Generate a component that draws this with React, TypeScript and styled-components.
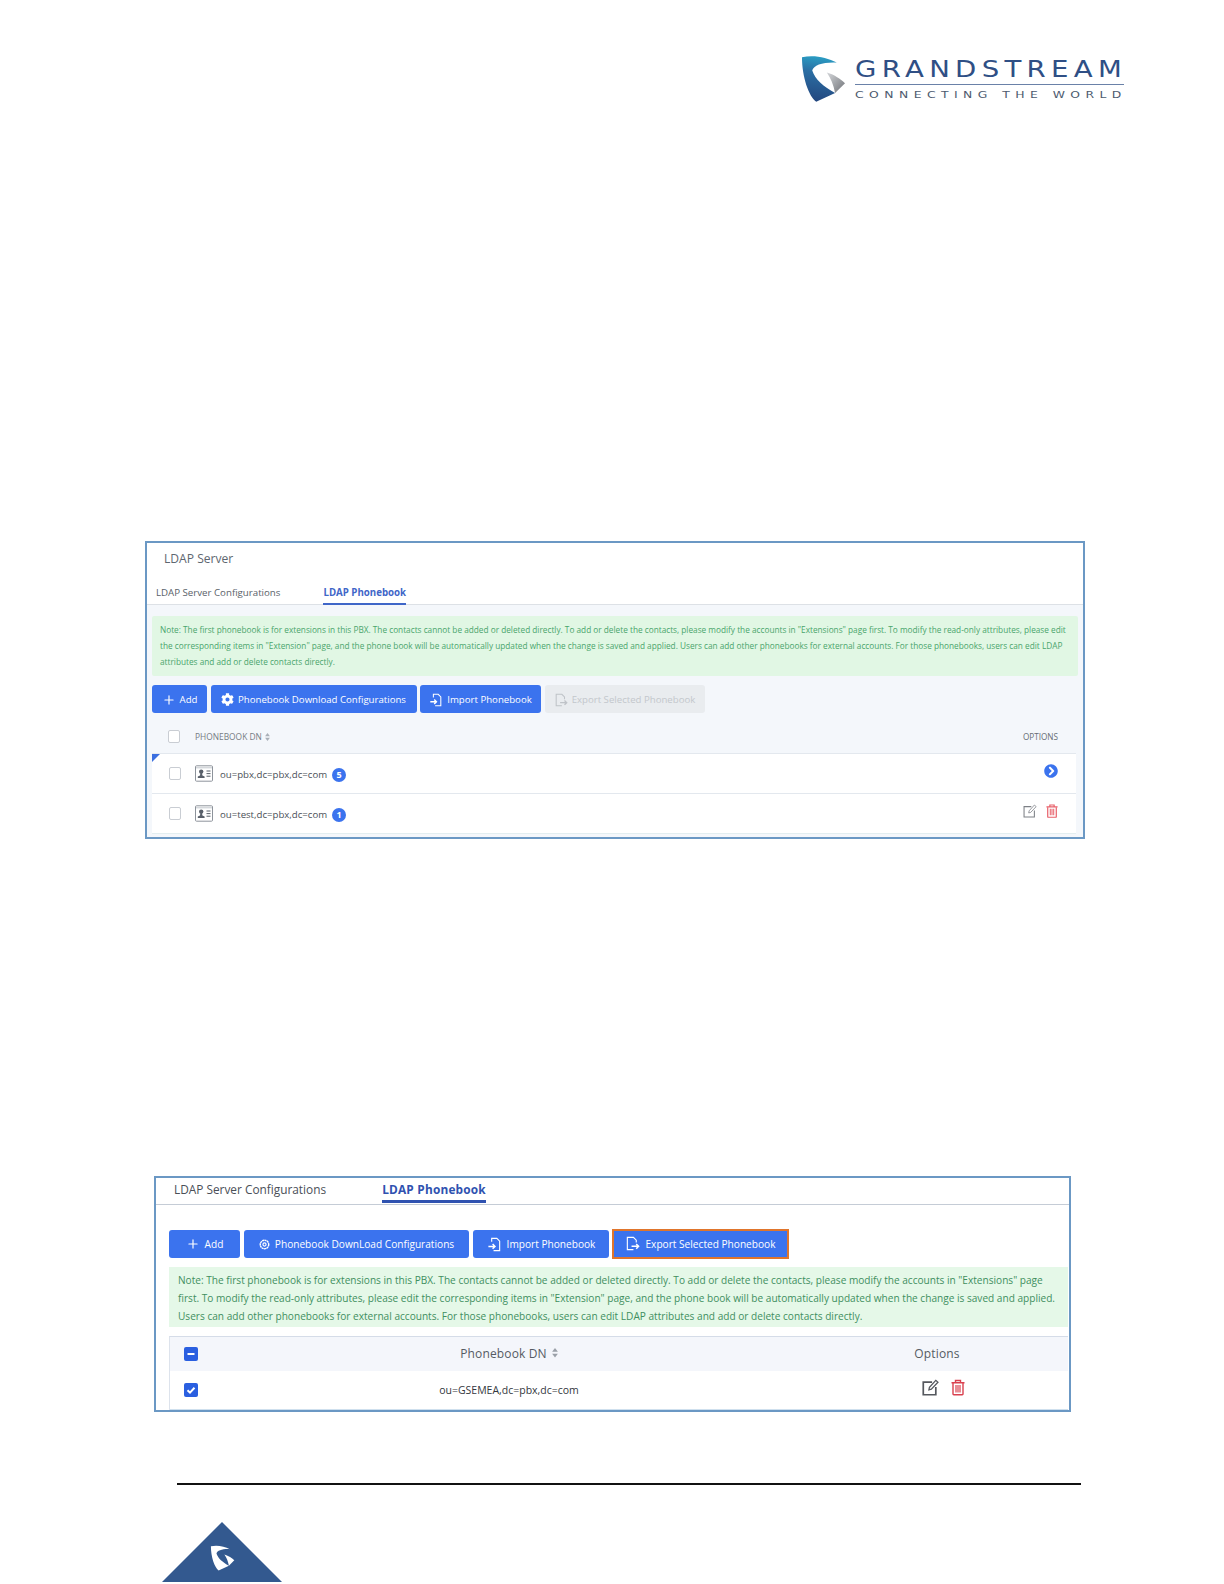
import React from "react";
import styled, { createGlobalStyle } from "styled-components";
import { FaCog, FaChevronCircleRight } from "react-icons/fa";
import { Plus } from "lucide-react";

const BLUE = "#3b73ee";
const FONT = `"Open Sans", "Noto Sans", sans-serif`;

const noteA = [
  'Note: The first phonebook is for extensions in this PBX. The contacts cannot be added or deleted directly. To add or delete the contacts, please modify the accounts in "Extensions" page first. To modify the read-only attributes, please edit',
  'the corresponding items in "Extension" page, and the phone book will be automatically updated when the change is saved and applied. Users can add other phonebooks for external accounts. For those phonebooks, users can edit LDAP',
  "attributes and add or delete contacts directly.",
];
const noteB = [
  'Note: The first phonebook is for extensions in this PBX. The contacts cannot be added or deleted directly. To add or delete the contacts, please modify the accounts in "Extensions" page',
  'first. To modify the read-only attributes, please edit the corresponding items in "Extension" page, and the phone book will be automatically updated when the change is saved and applied.',
  "Users can add other phonebooks for external accounts. For those phonebooks, users can edit LDAP attributes and add or delete contacts directly.",
];

const markBody =
  "M65 52 C100 44 140 52 170 68 C130 66 100 75 96 92 C105 120 130 140 165 160 L108 186 C85 170 65 110 65 52 Z";
const markWedge = "M140 98 C165 105 180 118 195 130 L165 160 C160 135 152 115 140 98 Z";

const LogoMark = () => (
  <svg width="47" height="48" viewBox="60 45 140 145">
    <defs>
      <linearGradient id="gsMark" x1="0.5" y1="0" x2="0.4" y2="1">
        <stop offset="0" stopColor="#2a9ec4" />
        <stop offset="0.35" stopColor="#2b6ea3" />
        <stop offset="1" stopColor="#23477f" />
      </linearGradient>
      <linearGradient id="gsWedge" x1="0" y1="0" x2="1" y2="1">
        <stop offset="0" stopColor="#d5d7da" />
        <stop offset="1" stopColor="#6d7075" />
      </linearGradient>
    </defs>
    <path d={markBody} fill="url(#gsMark)" />
    <path d={markWedge} fill="url(#gsWedge)" />
  </svg>
);

const FooterMark = () => (
  <svg width="120" height="60" viewBox="0 0 120 60">
    <polygon points="60,0 120,60 0,60" fill="#33598f" />
    <g transform="translate(48 23) scale(0.18) translate(-60 -45)">
      <path d={markBody} fill="#fff" />
      <path d={markWedge} fill="#fff" />
    </g>
  </svg>
);

const ImportIcon = ({ size }: { size: number }) => (
  <svg width={size} height={size} viewBox="0 0 16 16" fill="none" stroke="#fff" strokeWidth="1.2">
    <path d="M5 5 V1.5 H10.5 L13.5 4.5 V14.5 H7" />
    <path d="M1.5 10 H8 M6 7.5 L8.5 10 L6 12.5" strokeWidth="1.6" />
  </svg>
);

const ExportIcon = ({ size, color }: { size: number; color: string }) => (
  <svg width={size} height={size} viewBox="0 0 16 16" fill="none" stroke={color} strokeWidth="1.2">
    <path d="M9 14.5 H2.5 V1.5 H9 L12 4.5 V7" />
    <path d="M7 11 H14 M12 8.5 L14.5 11 L12 13.5" strokeWidth="1.6" />
  </svg>
);

const RingGear = () => (
  <svg width="11" height="11" viewBox="0 0 14 14" fill="none" stroke="#fff">
    <circle cx="7" cy="7" r="5.4" strokeWidth="1.8" strokeDasharray="2.6 0.5" />
    <circle cx="7" cy="7" r="2" strokeWidth="1.5" />
  </svg>
);

const CardIcon = () => (
  <svg width="18" height="17" viewBox="0 0 18 17" fill="none">
    <rect x="0.5" y="0.8" width="17" height="15.4" rx="1" stroke="#8d939b" />
    <path d="M1 2.8 H17" stroke="#c4c8cd" />
    <circle cx="6.2" cy="6.6" r="2.2" fill="#59606a" />
    <path d="M5.4 8 H7 L7.4 10.4 L9.6 11.4 V13 H2.8 V11.4 L5 10.4 Z" fill="#59606a" />
    <path d="M11.5 6 H15.5 M11.5 8.6 H15.5 M11.5 11.2 H15.5" stroke="#59606a" />
  </svg>
);

const EditIcon = ({ size, color, weight }: { size: number; color: string; weight: number }) => (
  <svg width={size} height={size} viewBox="0 0 16 16" fill="none" stroke={color} strokeWidth={weight}>
    <path d="M9.5 3 H1.2 V14.8 H13 V7.5" />
    <path d="M6.5 10.2 L7 7.8 L13 1.2 L15 3 L8.8 9.6 Z" strokeWidth={weight * 0.75} />
  </svg>
);

const TrashIcon = ({ width, height, color }: { width: number; height: number; color: string }) => (
  <svg width={width} height={height} viewBox="0 0 14 16" fill="none" stroke={color} strokeWidth="1.4">
    <path d="M0.5 3.2 H13.5 M4.5 3 V1 H9.5 V3" />
    <path d="M2 3.5 V14.6 Q2 15.3 2.8 15.3 H11.2 Q12 15.3 12 14.6 V3.5" />
    <path d="M5 5.5 V13 M7 5.5 V13 M9 5.5 V13" strokeWidth="1.2" />
  </svg>
);

const SortCaret = ({ color, size }: { color: string; size: number }) => (
  <svg width={size} height={size * 1.6} viewBox="0 0 6 10" fill={color}>
    <polygon points="3,0 6,4 0,4" />
    <polygon points="3,10 6,6 0,6" />
  </svg>
);

const App = () => {
  return (
    <Page>
      <GlobalStyle />
      <Brand>
        <LogoMark />
        <BrandText>
          <BrandName>GRANDSTREAM</BrandName>
          <BrandRule />
          <BrandTag>CONNECTING THE WORLD</BrandTag>
        </BrandText>
      </Brand>

      <ShotA>
        <PanelTitle>LDAP Server</PanelTitle>
        <TabsA>
          <TabA>LDAP Server Configurations</TabA>
          <TabA $active>LDAP Phonebook</TabA>
        </TabsA>
        <BodyA>
          <NoteA>
            {noteA.map((line) => (
              <NoteLine key={line}>{line}</NoteLine>
            ))}
          </NoteA>
          <ButtonsA>
            <ButtonA $w={55}>
              <Plus size={14} strokeWidth={2} />
              Add
            </ButtonA>
            <ButtonA $w={206}>
              <FaCog size={13} />
              Phonebook Download Configurations
            </ButtonA>
            <ButtonA $w={121}>
              <ImportIcon size={14} />
              Import Phonebook
            </ButtonA>
            <ButtonA $w={160} $disabled>
              <ExportIcon size={14} color="#bfc3c8" />
              Export Selected Phonebook
            </ButtonA>
          </ButtonsA>
          <HeadA>
            <CheckA />
            <HeadLabel>
              PHONEBOOK DN <SortCaret color="#a9afb7" size={5} />
            </HeadLabel>
            <OptionsLabel>OPTIONS</OptionsLabel>
          </HeadA>
          <RowA $first>
            <Corner />
            <CheckA />
            <CardIcon />
            <RowText>ou=pbx,dc=pbx,dc=com</RowText>
            <Count>5</Count>
            <RowActions>
              <FaChevronCircleRight size={14} color={BLUE} />
            </RowActions>
          </RowA>
          <RowA>
            <CheckA />
            <CardIcon />
            <RowText>ou=test,dc=pbx,dc=com</RowText>
            <Count>1</Count>
            <RowActions>
              <EditIcon size={14} color="#7d8086" weight={1.2} />
              <TrashIcon width={12} height={14} color="#e8606a" />
            </RowActions>
          </RowA>
        </BodyA>
      </ShotA>

      <ShotB>
        <TabsB>
          <TabB>LDAP Server Configurations</TabB>
          <TabB $active>LDAP Phonebook</TabB>
        </TabsB>
        <BodyB>
          <ButtonsB>
            <ButtonB $w={71}>
              <Plus size={14} strokeWidth={2} />
              Add
            </ButtonB>
            <ButtonB $w={225}>
              <RingGear />
              Phonebook DownLoad Configurations
            </ButtonB>
            <ButtonB $w={136}>
              <ImportIcon size={15} />
              Import Phonebook
            </ButtonB>
            <ExportFrame>
              <ButtonB $w={173}>
                <ExportIcon size={15} color="#fff" />
                Export Selected Phonebook
              </ButtonB>
            </ExportFrame>
          </ButtonsB>
          <NoteB>
            {noteB.map((line) => (
              <NoteLine key={line}>{line}</NoteLine>
            ))}
          </NoteB>
          <TableB>
            <HeadB>
              <CheckB>
                <svg width="14" height="14" viewBox="0 0 14 14">
                  <path d="M3.5 7 H10.5" stroke="#fff" strokeWidth="2" />
                </svg>
              </CheckB>
              <HeadCell>
                Phonebook DN <SortCaret color="#9aa0a8" size={6} />
              </HeadCell>
              <HeadCell>Options</HeadCell>
            </HeadB>
            <RowB>
              <CheckB>
                <svg width="14" height="14" viewBox="0 0 14 14" fill="none">
                  <path d="M3.5 7.2 L6 9.6 L10.5 4.8" stroke="#fff" strokeWidth="2" />
                </svg>
              </CheckB>
              <RowCell>ou=GSEMEA,dc=pbx,dc=com</RowCell>
              <RowIcons>
                <EditIcon size={17} color="#55585e" weight={1.6} />
                <TrashIcon width={14} height={17} color="#d9414f" />
              </RowIcons>
            </RowB>
          </TableB>
        </BodyB>
      </ShotB>

      <FooterRule />
      <FooterBadge>
        <FooterMark />
      </FooterBadge>
    </Page>
  );
};

export default App;

const GlobalStyle = createGlobalStyle`
  html, body {
    margin: 0;
    padding: 0;
    background: #fff;
  }
`;

const Page = styled.div`
  width: 1224px;
  height: 1584px;
  overflow: hidden;
  display: flex;
  flex-direction: column;
  background: #fff;
  font-family: ${FONT};
`;

const Brand = styled.div`
  margin: 55px 0 0 800px;
  height: 48px;
  display: flex;
  gap: 8px;
`;
const BrandText = styled.div`
  display: flex;
  flex-direction: column;
  width: 269px;
  padding-top: 2px;
`;
const BrandName = styled.div`
  font-family: "DejaVu Sans", sans-serif;
  font-size: 23px;
  line-height: 24px;
  letter-spacing: 4.4px;
  color: #2f4f85;
  white-space: nowrap;
  transform: scaleX(1.2);
  transform-origin: left center;
`;
const BrandRule = styled.div`
  height: 1px;
  background: #6a81a8;
  margin-top: 3px;
`;
const BrandTag = styled.div`
  font-family: "DejaVu Sans", sans-serif;
  font-size: 9.5px;
  line-height: 12px;
  margin-top: 4px;
  letter-spacing: 4.2px;
  color: #4c5a6e;
  white-space: nowrap;
  transform: scaleX(1.3);
  transform-origin: left center;
`;

const ShotA = styled.div`
  margin: 438px 0 0 145px;
  width: 940px;
  height: 298px;
  box-sizing: border-box;
  border: 2px solid #6b98c4;
  display: flex;
  flex-direction: column;
`;
const PanelTitle = styled.div`
  height: 30px;
  line-height: 30px;
  padding: 1px 0 0 17px;
  box-sizing: border-box;
  font-size: 12.1px;
  color: #5e6670;
`;
const TabsA = styled.div`
  height: 32px;
  box-sizing: border-box;
  padding-left: 9px;
  display: flex;
  gap: 43px;
  border-bottom: 1px solid #dde1e6;
`;
const TabA = styled.div<{ $active?: boolean }>`
  height: 32px;
  box-sizing: border-box;
  padding-top: 12px;
  line-height: 16px;
  font-size: 9.7px;
  white-space: nowrap;
  font-weight: ${({ $active }) => ($active ? 700 : 400)};
  color: ${({ $active }) => ($active ? "#3f66c8" : "#5a6169")};
  border-bottom: ${({ $active }) => ($active ? "2px solid #3f66c8" : "none")};
`;
const BodyA = styled.div`
  flex: 1;
  background: #f4f7fb;
  padding: 11px 7px 0 5px;
`;
const NoteLine = styled.div`
  white-space: nowrap;
`;
const NoteA = styled.div`
  height: 60px;
  box-sizing: border-box;
  padding: 6px 8px;
  width: 926px;
  margin-right: -2px;
  background: #e1f7e4;
  border-radius: 2px;
  color: #4aa56c;
  font-size: 8.25px;
  line-height: 16px;
`;
const ButtonsA = styled.div`
  margin-top: 9px;
  display: flex;
  gap: 3.5px;
`;
const ButtonA = styled.div<{ $w: number; $disabled?: boolean }>`
  width: ${({ $w }) => $w}px;
  height: 28px;
  box-sizing: border-box;
  border-radius: 3px;
  padding-top: 1px;
  display: flex;
  align-items: center;
  justify-content: center;
  gap: 4px;
  white-space: nowrap;
  font-size: 9.65px;
  background: ${({ $disabled }) => ($disabled ? "#e9ecef" : BLUE)};
  color: ${({ $disabled }) => ($disabled ? "#c3c7cc" : "#fff")};
`;
const HeadA = styled.div`
  height: 40px;
  display: flex;
  align-items: center;
  padding: 7px 18px 0 16px;
  box-sizing: border-box;
  gap: 15px;
`;
const HeadLabel = styled.div`
  display: flex;
  align-items: center;
  gap: 3px;
  font-size: 8.4px;
  color: #767c84;
`;
const OptionsLabel = styled.div`
  margin-left: auto;
  font-size: 8.2px;
  color: #666c74;
`;
const CheckA = styled.div`
  width: 12px;
  height: 13px;
  box-sizing: border-box;
  background: #fff;
  border: 1px solid #c9cdd3;
  border-radius: 2px;
  flex: none;
`;
const RowA = styled.div<{ $first?: boolean }>`
  position: relative;
  height: 40px;
  box-sizing: border-box;
  background: #fff;
  border-top: 1px solid #e3e8ee;
  padding: 0 18px 0 17px;
  display: flex;
  align-items: center;
  &:last-child {
    height: 41px;
    border-bottom: 1px solid #e3eef0;
  }
  & > svg {
    margin-left: 14px;
  }
`;
const Corner = styled.div`
  position: absolute;
  left: 0;
  top: 0;
  width: 0;
  height: 0;
  border-top: 8px solid #3b6fe0;
  border-right: 8px solid transparent;
`;
const RowText = styled.div`
  margin-left: 7px;
  padding-top: 1px;
  font-size: 9.65px;
  color: #4a4f57;
  white-space: nowrap;
`;
const Count = styled.div`
  margin-left: 5px;
  width: 14px;
  height: 14px;
  border-radius: 50%;
  background: ${BLUE};
  color: #fff;
  font-size: 9px;
  font-weight: 700;
  display: flex;
  align-items: center;
  justify-content: center;
  position: relative;
  top: 1px;
`;
const RowActions = styled.div`
  margin-left: auto;
  display: flex;
  align-items: center;
  gap: 9px;
  position: relative;
  top: -3px;
`;

const ShotB = styled.div`
  margin: 337px 0 0 154px;
  width: 917px;
  height: 236px;
  box-sizing: border-box;
  border: 2px solid #6b98c4;
  display: flex;
  flex-direction: column;
`;
const TabsB = styled.div`
  height: 27px;
  box-sizing: border-box;
  padding-left: 18px;
  display: flex;
  gap: 56px;
  border-bottom: 1px solid #c5ccd6;
`;
const TabB = styled.div<{ $active?: boolean }>`
  height: 25px;
  box-sizing: border-box;
  line-height: 23px;
  font-size: 11.85px;
  white-space: nowrap;
  letter-spacing: ${({ $active }) => ($active ? "0.2px" : "0")};
  font-weight: ${({ $active }) => ($active ? 700 : 400)};
  color: ${({ $active }) => ($active ? "#2f52b0" : "#4a4f57")};
  border-bottom: ${({ $active }) => ($active ? "3px solid #2f52b0" : "none")};
`;
const BodyB = styled.div`
  flex: 1;
  padding: 25px 1px 0 13px;
`;
const ButtonsB = styled.div`
  display: flex;
  align-items: center;
  gap: 4px;
  height: 28px;
`;
const ButtonB = styled.div<{ $w: number }>`
  width: ${({ $w }) => $w}px;
  height: 28px;
  box-sizing: border-box;
  border-radius: 3px;
  display: flex;
  align-items: center;
  justify-content: center;
  gap: 5px;
  white-space: nowrap;
  font-size: 10.15px;
  background: ${BLUE};
  color: #fff;
`;
const ExportFrame = styled.div`
  margin-left: -1px;
  border: 2px solid #e0752c;
  margin-top: -1px;
  display: flex;
  & > div {
    border-radius: 0;
    height: 26px;
  }
`;
const NoteB = styled.div`
  margin-top: 9px;
  height: 60px;
  box-sizing: border-box;
  padding: 4px 9px;
  background: #e5f8e8;
  color: #3f8f5f;
  font-size: 10.1px;
  line-height: 18px;
`;
const TableB = styled.div`
  margin-top: 9px;
  border-top: 1px solid #d5dce8;
  border-left: 1px solid #dde3ec;
`;
const HeadB = styled.div`
  height: 34px;
  background: #f4f6fb;
  display: grid;
  grid-template-columns: 35px 608px 248px;
  align-items: center;
`;
const RowB = styled.div`
  height: 38px;
  display: grid;
  grid-template-columns: 35px 608px 248px;
  align-items: center;
  border-bottom: 1px solid #cfe0ee;
`;
const CheckB = styled.div`
  width: 14px;
  height: 14px;
  margin-left: 14px;
  border-radius: 2px;
  background: #2a5fe0;
  display: flex;
`;
const HeadCell = styled.div`
  display: flex;
  align-items: center;
  justify-content: center;
  gap: 5px;
  padding-bottom: 2px;
  font-size: 12px;
  letter-spacing: 0.15px;
  color: #555b63;
`;
const RowCell = styled.div`
  text-align: center;
  font-size: 10.5px;
  color: #33373d;
`;
const RowIcons = styled.div`
  display: flex;
  justify-content: center;
  gap: 12px;
  padding-left: 13px;
  position: relative;
  top: -3px;
`;

const FooterRule = styled.div`
  margin: 71px 0 0 177px;
  width: 904px;
  height: 2px;
  background: #111;
`;
const FooterBadge = styled.div`
  margin: 37px 0 0 162px;
  display: flex;
`;
